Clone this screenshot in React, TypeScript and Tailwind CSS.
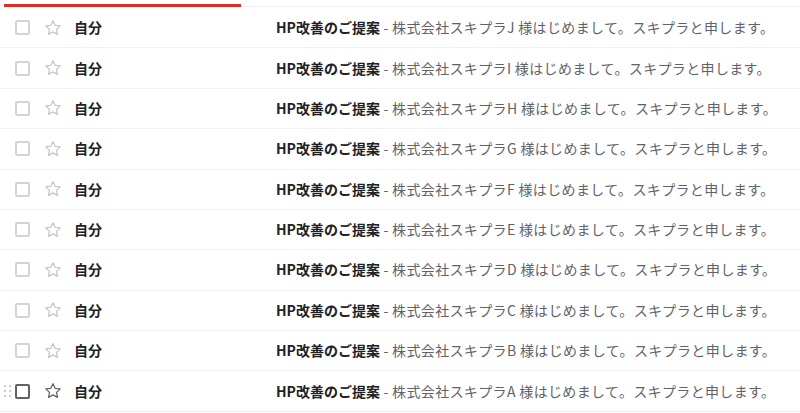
import React from 'react';

const letters = ['J', 'I', 'H', 'G', 'F', 'E', 'D', 'C', 'B', 'A'];

const Star = ({ dark }: { dark: boolean }) => (
    <svg width="20" height="20" viewBox="0 0 24 24" fill="none" stroke={dark ? '#5f6368' : '#c6c6c6'} strokeWidth="1.5" strokeLinejoin="round">
        <path d="M12 3.2l2.6 5.6 6.1.7-4.5 4.2 1.2 6-5.4-3-5.4 3 1.2-6-4.5-4.2 6.1-.7z" />
    </svg>
);

const DragHandle = () => (
    <div className="grid grid-cols-2 gap-x-[2px] gap-y-[3px] w-[7px]">
        {[0, 1, 2, 3, 4, 5].map((i) => (
            <span key={i} className="block w-[2px] h-[2px] rounded-full bg-[#bdbdbd]" />
        ))}
    </div>
);

const MailRow = ({ letter, hover }: { letter: string; hover: boolean }) => {
    return (
        <div className={`relative flex items-center h-[40.375px] border-b ${hover ? 'border-[#ececec]' : 'border-[#f1f1f1]'}`}>
            {/* drag handle only on hovered row */}
            <div className="w-[15px] flex justify-center">{hover && <DragHandle />}</div>
            <span className={`block w-[15px] h-[15px] rounded-[2px] border-2 ${hover ? 'border-[#5f6368]' : 'border-[#d4d4d4]'}`} />
            <div className="ml-[13px] w-[20px] flex justify-center">
                <Star dark={hover} />
            </div>
            <span className="ml-[11px] w-[202px] font-bold text-[14px] text-[#202124]">自分</span>
            <p className="text-[14px] whitespace-nowrap">
                <span className="font-bold text-[#202124]">HP改善のご提案</span>
                <span className="text-[#5f6368] tracking-[0.35px]"> - 株式会社スキプラ{letter} 様はじめまして。スキプラと申します。</span>
            </p>
        </div>
    );
};

const App = () => {
    return (
        <div className="w-[800px] h-[413px] overflow-hidden bg-white" style={{ fontFamily: '"Noto Sans CJK JP", "Liberation Sans", sans-serif' }}>
            {/* PROGRESS BAR */}
            <div className="pt-[4px] flex items-end">
                <div className="ml-[4px] w-[237px] h-[3px] bg-[#d93025]" />
                <div className="flex-1 h-[1px] bg-[#f1f1f1]" />
            </div>
            {/* LIST */}
            <div className="flex flex-col pt-[1px]">
                {letters.map((l, i) => (
                    <MailRow key={l} letter={l} hover={i === letters.length - 1} />
                ))}
            </div>
        </div>
    );
};

export default App;
